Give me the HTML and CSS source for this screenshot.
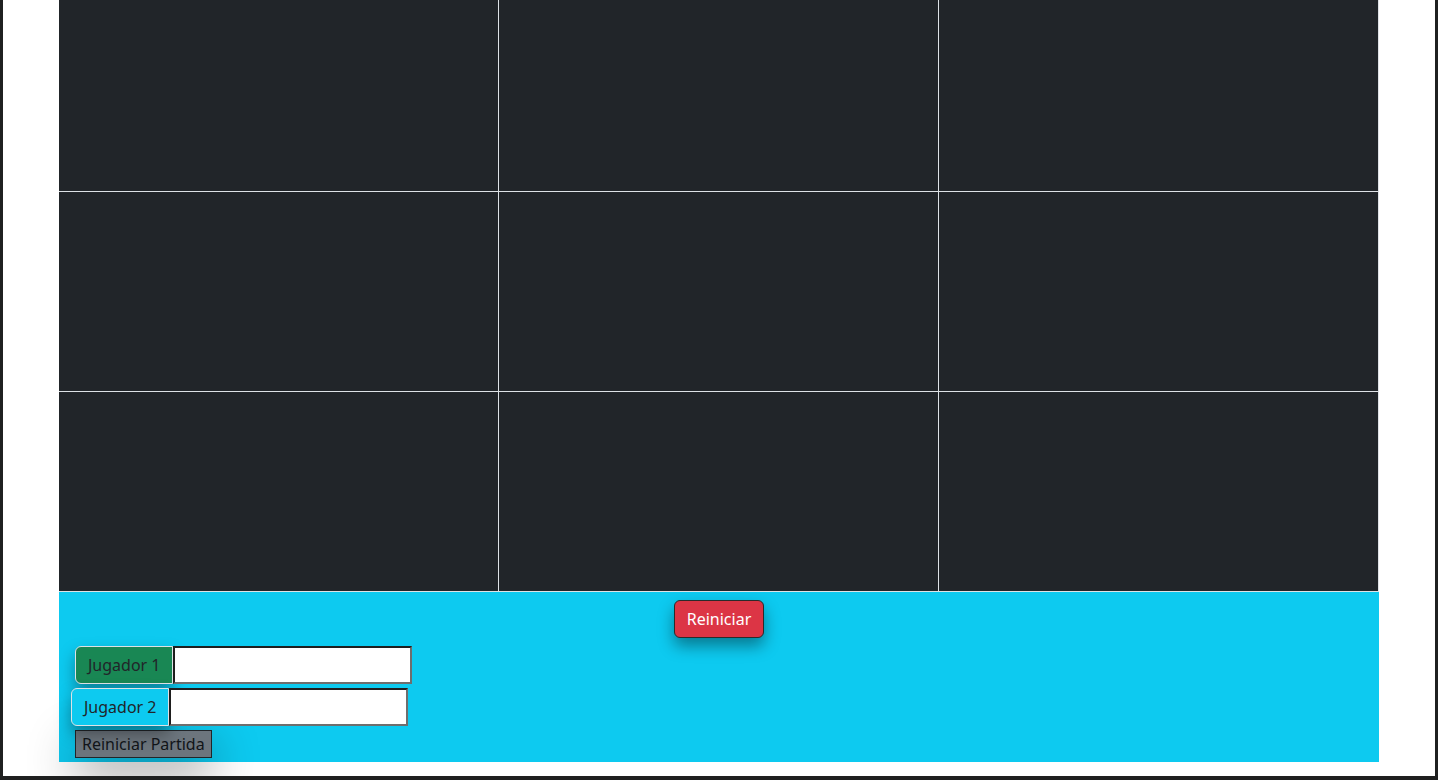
FILE: index.html
```html
<!DOCTYPE html>
<html lang="es">
<head>
<meta charset="utf-8">
<title>Tres en raya</title>
<link rel="stylesheet" href="styles.css">
</head>
<body>
<div class="frame">
  <div class="container">
    <div class="board">
      <div class="cell"></div><div class="cell"></div><div class="cell"></div>
      <div class="cell"></div><div class="cell"></div><div class="cell"></div>
      <div class="cell"></div><div class="cell"></div><div class="cell"></div>
    </div>
    <div class="controls">
      <div class="center">
        <button class="btn-reset">Reiniciar</button>
      </div>
      <div class="group group-one">
        <span class="label label-green">Jugador 1</span>
        <input class="name-input" type="text">
      </div>
      <div class="group group-two">
        <span class="label label-cyan">Jugador 2</span>
        <input class="name-input" type="text">
      </div>
      <button class="btn-match">Reiniciar Partida</button>
    </div>
  </div>
</div>
</body>
</html>
```

FILE: styles.css
```css
html, body {
  margin: 0;
  padding: 0;
  background: #ffffff;
  font-family: "Noto Sans", "Open Sans", sans-serif;
  font-size: 16px;
  line-height: 1.5;
  color: #212529;
}

.frame {
  border: 3px solid #1f2020;
  border-bottom-width: 4px;
  border-top: none;
  box-sizing: border-box;
  height: 780px;
  overflow: hidden;
}

.container {
  width: 1320px;
  margin: 0 auto;
}

.board {
  display: grid;
  grid-template-columns: repeat(3, 440px);
  grid-template-rows: repeat(3, 200px);
  margin-top: -8px;
}

.cell {
  background: #212529;
  border-right: 1px solid #dee2e6;
  border-bottom: 1px solid #dee2e6;
}

.controls {
  background: #0dcaf0;
  padding: 8px 0 4px;
  height: 170px;
  box-sizing: border-box;
}

.center {
  display: flex;
  justify-content: center;
}

.btn-reset {
  font-family: inherit;
  font-size: 16px;
  line-height: 24px;
  color: #ffffff;
  background: #dc3545;
  border: 1px solid #2b2b2b;
  border-radius: 6px;
  padding: 6px 12px;
  box-shadow: 0 8px 16px rgba(0, 0, 0, 0.4);
  cursor: pointer;
}

.group {
  display: flex;
  align-items: stretch;
  height: 38px;
}

.group-one {
  margin: 8px 0 0 16px;
}

.group-two {
  margin: 4px 0 0 12px;
}

.label {
  display: flex;
  align-items: center;
  padding: 6px 12px;
  border: 1px solid #dee2e6;
  border-radius: 6px 0 0 6px;
  box-sizing: border-box;
  width: 98px;
  color: #212529;
  white-space: nowrap;
  box-shadow: 0 8px 16px rgba(0, 0, 0, 0.35);
}

.label-green {
  background: #198754;
}

.label-cyan {
  background: #0dcaf0;
}

.name-input {
  width: 239px;
  height: 38px;
  box-sizing: border-box;
  margin: 0;
  padding: 1px 2px;
  background: #ffffff;
  border-style: solid;
  border-width: 2px;
  border-color: #1e1e1e #6e6e6e #6e6e6e #1e1e1e;
  font-family: inherit;
  font-size: 16px;
}

.btn-match {
  display: block;
  margin: 4px 0 0 16px;
  font-family: inherit;
  font-size: 16px;
  line-height: 24px;
  padding: 1px 6px;
  color: #111418;
  background: #6c757d;
  border: 1px solid #212529;
  border-radius: 0;
  box-shadow: 0 16px 48px rgba(0, 0, 0, 0.45);
}
```
